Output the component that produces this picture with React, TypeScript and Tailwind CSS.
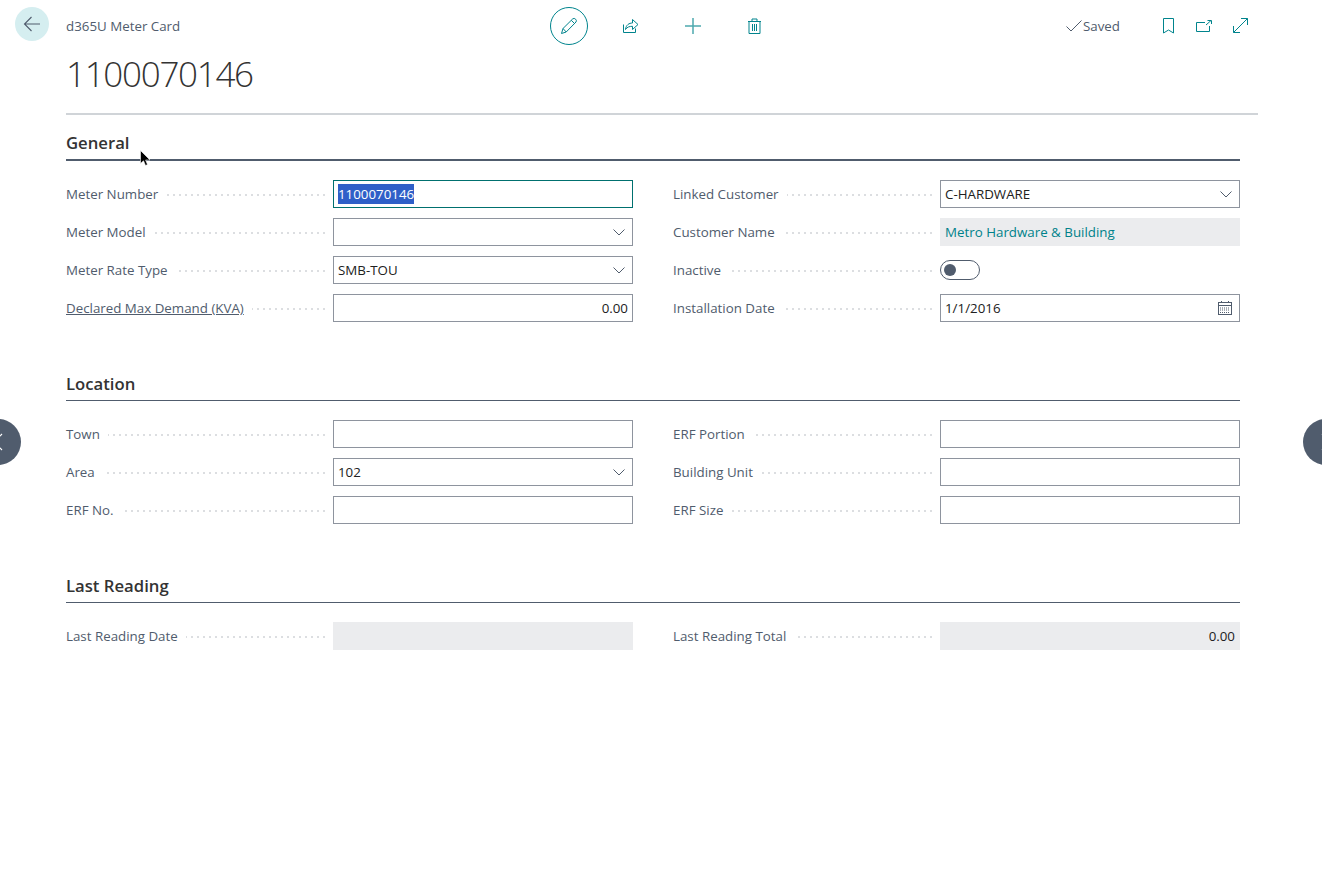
import { ReactNode } from "react";

const fonte = "font-['Open_Sans','Noto_Sans',sans-serif]";

/* Ícones desenhados a mão, no traço fino do Business Central */
function Chevron() {
  return (
    <svg width="12" height="7" viewBox="0 0 12 7" fill="none" stroke="#505c6d" strokeWidth="1">
      <path d="M0.5 0.5 L6 6 L11.5 0.5" />
    </svg>
  );
}

function Calendar() {
  return (
    <svg className="mr-[-1px]" width="16" height="16" viewBox="0 0 16 16" fill="none" stroke="#505c6d" strokeWidth="1">
      <rect x="1.5" y="2.5" width="13" height="12" />
      <path d="M1.5 5.5 H14.5 M4.5 1 V3 M11.5 1 V3" />
      <path d="M3 8 H13 M3 10 H13 M3 12.5 H13" strokeDasharray="1 1" />
    </svg>
  );
}

function ToolIcon({ children, w = 18, h = 18 }: { children: ReactNode; w?: number; h?: number }) {
  return (
    <svg width={w} height={h} viewBox={`0 0 ${w} ${h}`} fill="none" stroke="#00848d" strokeWidth="1">
      {children}
    </svg>
  );
}

/* Campo com rótulo e pontilhado até o valor */
function Field({
  label,
  underline,
  children,
}: {
  label: string;
  underline?: boolean;
  children: ReactNode;
}) {
  return (
    <div className="flex h-[28px] items-center">
      <div className="flex w-[267px] items-center">
        <span className={`whitespace-nowrap pt-[2px] text-[13.33px] text-[#505c6d] ${underline ? "underline" : ""}`}>
          {label}
        </span>
        <div className="ml-2 mr-[8px] mt-[2px] h-[2px] flex-1 bg-[repeating-linear-gradient(to_left,#dcdee1_0,#dcdee1_2px,transparent_2px,transparent_6px)]" />
      </div>
      {children}
    </div>
  );
}

function Input({ value, right, icon }: { value?: string; right?: boolean; icon?: ReactNode }) {
  return (
    <div className="flex h-[28px] w-[300px] items-center border border-[#8e949e] bg-white pl-[4px] pr-[4px] text-[13.33px] text-[#212121]">
      <span className={`flex-1 whitespace-nowrap pt-[2px] ${right ? "text-right" : ""}`}>{value}</span>
      {icon && <span className="flex items-center pr-[3px]">{icon}</span>}
    </div>
  );
}

function ReadOnly({ value, right, link }: { value?: string; right?: boolean; link?: boolean }) {
  return (
    <div
      className={`flex h-[28px] w-[300px] items-center bg-[#ebecee] pl-[5px] pr-[5px] text-[13.33px] ${
        link ? "text-[#00828a]" : "text-[#212121]"
      } ${right ? "justify-end" : ""}`}
    >
      <span className="pt-[2px]">{value}</span>
    </div>
  );
}

function Section({ title, thick, children }: { title: string; thick?: boolean; children: ReactNode }) {
  return (
    <section>
      <h2 className="mb-[3px] flex h-[26px] items-center text-[16.7px] font-semibold text-[#333]">{title}</h2>
      <div className={`mb-[19px] bg-[#505c6d] ${thick ? "h-[2px]" : "h-px"}`} />
      {children}
    </section>
  );
}

export default function App() {
  return (
    <div className={`relative h-screen overflow-hidden bg-white ${fonte}`}>
      {/* Barra superior */}
      <header className="mt-[7px] flex h-[38px] items-center pl-[15px]">
        <button className="flex h-[34px] w-[34px] items-center justify-center self-start rounded-full bg-[#d5eef0]">
          <svg width="18" height="16" viewBox="0 0 18 16" fill="none" stroke="#505c6d" strokeWidth="1.1">
            <path d="M17 8 H1.5 M8.5 1 L1.5 8 L8.5 15" />
          </svg>
        </button>
        <span className="ml-[17px] w-[484px] pt-[2px] text-[13.33px] text-[#505c6d]">d365U Meter Card</span>

        <div className="flex h-[38px] w-[38px] items-center justify-center rounded-full border border-[#00848d]">
          <ToolIcon>
            <path d="M1.5 16.5 L3 11.5 L12.8 1.8 Q14.2 0.8 15.6 2.2 Q17 3.6 16 5 L6.2 15 Z M3 11.5 L6.2 15 M11.3 3.3 L14.5 6.5" />
          </ToolIcon>
        </div>
        <div className="ml-[33px] flex w-[18px] justify-center">
          <ToolIcon w={17} h={16}>
            <path d="M1.5 6.5 V14.5 H13.5 V10.5 M3.5 11.5 C4 7 7 5 10.5 5 V1.5 L16 6.5 L10.5 11.5 V8.3 C7.5 8.3 5 9 3.5 11.5 Z" />
          </ToolIcon>
        </div>
        <div className="ml-[45px] flex w-[18px] justify-center">
          <ToolIcon>
            <path d="M9 1 V17 M1 9 H17" strokeWidth="1.5" stroke="#4da9af" />
          </ToolIcon>
        </div>
        <div className="ml-[43px] flex w-[18px] justify-center">
          <ToolIcon w={15} h={16}>
            <path d="M1 3.5 H14 M2 3.5 V15.5 H13 V3.5 M5 3.5 V1 H10 V3.5 M5.5 6 V13 M7.5 6 V13 M9.5 6 V13" />
          </ToolIcon>
        </div>

        <div className="ml-auto flex items-center">
          <svg width="16" height="12" viewBox="0 0 16 12" fill="none" stroke="#505c6d" strokeWidth="1">
            <path d="M0.5 6.5 L5 11 L15.5 0.5" />
          </svg>
          <span className="ml-px pt-[2px] text-[13.33px] text-[#505c6d]">Saved</span>
          <div className="ml-[43px] flex">
            <ToolIcon w={11} h={16}>
              <path d="M0.5 0.5 H10.5 V15 L5.5 12 L0.5 15 Z" />
            </ToolIcon>
          </div>
          <div className="ml-[22px] flex">
            <ToolIcon w={16} h={12}>
              <path d="M9 2.5 H0.5 V11.5 H13.5 V6 M10 5 L15 0.5 M11.5 0.5 H15.5 V4" />
            </ToolIcon>
          </div>
          <div className="ml-[21px] mr-[74px] flex">
            <ToolIcon w={15} h={15}>
              <path d="M0.5 14.5 L14.5 0.5 M8 0.5 H14.5 V7 M0.5 8 V14.5 H7" />
            </ToolIcon>
          </div>
        </div>
      </header>

      {/* Título da página */}
      <div className="ml-[66px] mr-[64px] h-[70px] border-b-2 border-[#d0d4d8]">
        <h1 className="pt-[5px] text-[35px] font-light leading-[48px] tracking-[-1.3px] text-[#333]">1100070146</h1>
      </div>

      <main className="ml-[66px] mr-[82px] mt-[15px] flex flex-col gap-[49px]">
        <Section title="General" thick>
          <div className="grid grid-cols-2 gap-x-[40px] gap-y-[10px]">
            <Field label="Meter Number">
              <div className="flex h-[28px] w-[300px] items-center border border-[#00706f] pl-[4px] text-[13.33px]">
                <span className="bg-[#2f5fc8] pt-px text-white">1100070146</span>
              </div>
            </Field>
            <Field label="Linked Customer">
              <Input value="C-HARDWARE" icon={<Chevron />} />
            </Field>
            <Field label="Meter Model">
              <Input icon={<Chevron />} />
            </Field>
            <Field label="Customer Name">
              <ReadOnly value="Metro Hardware & Building" link />
            </Field>
            <Field label="Meter Rate Type">
              <Input value="SMB-TOU" icon={<Chevron />} />
            </Field>
            <Field label="Inactive">
              <div className="flex h-[20px] w-[40px] items-center rounded-full border border-[#505c6d] pl-[3px]">
                <div className="h-[12px] w-[12px] rounded-full bg-[#505c6d]" />
              </div>
            </Field>
            <Field label="Declared Max Demand (KVA)" underline>
              <Input value="0.00" right />
            </Field>
            <Field label="Installation Date">
              <Input value="1/1/2016" icon={<Calendar />} />
            </Field>
          </div>
        </Section>

        <Section title="Location">
          <div className="grid grid-cols-2 gap-x-[40px] gap-y-[10px]">
            <Field label="Town">
              <Input />
            </Field>
            <Field label="ERF Portion">
              <Input />
            </Field>
            <Field label="Area">
              <Input value="102" icon={<Chevron />} />
            </Field>
            <Field label="Building Unit">
              <Input />
            </Field>
            <Field label="ERF No.">
              <Input />
            </Field>
            <Field label="ERF Size">
              <Input />
            </Field>
          </div>
        </Section>

        <Section title="Last Reading">
          <div className="grid grid-cols-2 gap-x-[40px] gap-y-[10px]">
            <Field label="Last Reading Date">
              <ReadOnly />
            </Field>
            <Field label="Last Reading Total">
              <ReadOnly value="0.00" right />
            </Field>
          </div>
        </Section>
      </main>

      {/* Botões laterais de navegação */}
      <div className="absolute left-[-25px] top-[419px] flex h-[46px] w-[46px] items-center justify-end rounded-full bg-[#505c6d] pr-[18px]">
        <svg width="10" height="18" viewBox="0 0 10 18" fill="none" stroke="#fff" strokeWidth="1.2">
          <path d="M9 1 L1 9 L9 17" />
        </svg>
      </div>
      <div className="absolute left-[1303px] top-[419px] flex h-[46px] w-[46px] items-center rounded-full bg-[#505c6d] pl-[18px]">
        <svg width="10" height="18" viewBox="0 0 10 18" fill="none" stroke="#fff" strokeWidth="1.2">
          <path d="M1 1 L9 9 L1 17" />
        </svg>
      </div>

      {/* Ponteiro do mouse */}
      <svg className="absolute left-[140px] top-[150px]" width="11" height="17" viewBox="0 0 11 17">
        <path d="M0.5 0.5 V13.5 L3.5 10.8 L5.5 15.5 L7.5 14.6 L5.6 10 H10 Z" fill="#000" stroke="#fff" strokeWidth="0.6" />
      </svg>
    </div>
  );
}
